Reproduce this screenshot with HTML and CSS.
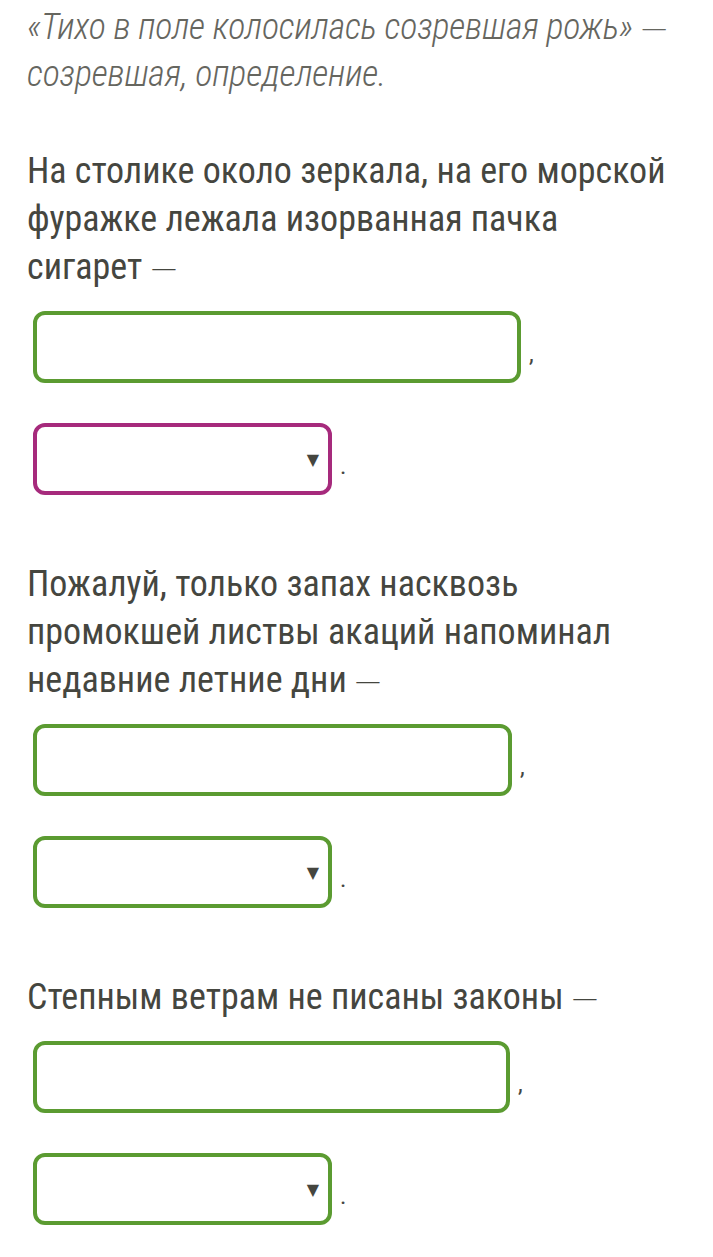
FILE: index.html
```html
<!DOCTYPE html>
<html lang="ru">
<head>
    <meta charset="UTF-8">
    <meta name="viewport" content="width=device-width, initial-scale=1.0">
    <title>Обособленные определения</title>
    <link rel="stylesheet" href="styles.css">
</head>
<body>
    <div class="task">
        <p class="example">«Тихо в поле колосилась созревшая рожь» <span class="dash">–</span> созревшая, определение.</p>

        <!-- Вопрос 1 -->
        <div class="question">
            <p class="sentence">На столике около зеркала, на его морской фуражке лежала изорванная пачка сигарет <span class="dash">–</span></p>
            <div class="answer-row">
                <input type="text" class="answer-input wide-1">
                <span class="mark">,</span>
            </div>
            <div class="answer-row">
                <div class="answer-select wrong">
                    <span class="arrow">▼</span>
                </div>
                <span class="mark">.</span>
            </div>
        </div>

        <!-- Вопрос 2 -->
        <div class="question">
            <p class="sentence">Пожалуй, только запах насквозь промокшей листвы акаций напоминал недавние летние дни <span class="dash">–</span></p>
            <div class="answer-row">
                <input type="text" class="answer-input wide-2">
                <span class="mark">,</span>
            </div>
            <div class="answer-row">
                <div class="answer-select">
                    <span class="arrow">▼</span>
                </div>
                <span class="mark">.</span>
            </div>
        </div>

        <!-- Вопрос 3 -->
        <div class="question">
            <p class="sentence">Степным ветрам не писаны законы <span class="dash">–</span></p>
            <div class="answer-row">
                <input type="text" class="answer-input wide-3">
                <span class="mark">,</span>
            </div>
            <div class="answer-row">
                <div class="answer-select">
                    <span class="arrow">▼</span>
                </div>
                <span class="mark">.</span>
            </div>
        </div>
    </div>
</body>
</html>
```

FILE: styles.css
```css
body {
    margin: 0;
    padding: 0;
    background: #ffffff;
    font-family: 'Roboto Condensed', 'Liberation Sans Narrow', 'Roboto', sans-serif;
    color: #45463f;
}

.task {
    padding: 0 41px 0 27px;
}

p {
    margin: 0;
}

.example {
    font-size: 36px;
    line-height: 47px;
    font-style: italic;
    font-weight: 300;
    letter-spacing: -0.2px;
    color: #66665f;
    padding-top: 4px;
    margin-right: -30px;
}

.question {
    margin-top: 49px;
}

.question + .question {
    margin-top: 65px;
}

.sentence {
    font-size: 36px;
    line-height: 48px;
}

/* тире тоньше и длиннее основного шрифта */
.dash {
    display: inline-block;
    font-family: 'DejaVu Sans', sans-serif;
    font-weight: 200;
    font-style: normal;
    line-height: 1;
    margin: 0 0.12em;
    transform: scaleX(1.6);
}

.answer-row {
    display: flex;
    align-items: center;
    padding-left: 6px;
    margin-top: 20px;
}

.answer-row + .answer-row {
    margin-top: 40px;
}

.answer-input,
.answer-select {
    height: 72px;
    box-sizing: border-box;
    border: 4px solid #5b9b31;
    border-radius: 12px;
    background: #ffffff;
    margin: 0;
}

.answer-input {
    padding: 0 12px;
    font-size: 30px;
    outline: none;
}

.wide-1 { width: 488px; }
.wide-2 { width: 479px; }
.wide-3 { width: 477px; }

.answer-select {
    width: 299px;
    display: flex;
    align-items: center;
    justify-content: flex-end;
    padding-right: 9px;
}

.answer-select.wrong {
    border-color: #a62a7c;
}

.arrow {
    font-size: 16px;
    color: #45463f;
    font-family: 'DejaVu Sans', sans-serif;
}

.mark {
    font-size: 24px;
    color: #45463f;
    margin-left: 8px;
    padding-top: 14px;
}
```
